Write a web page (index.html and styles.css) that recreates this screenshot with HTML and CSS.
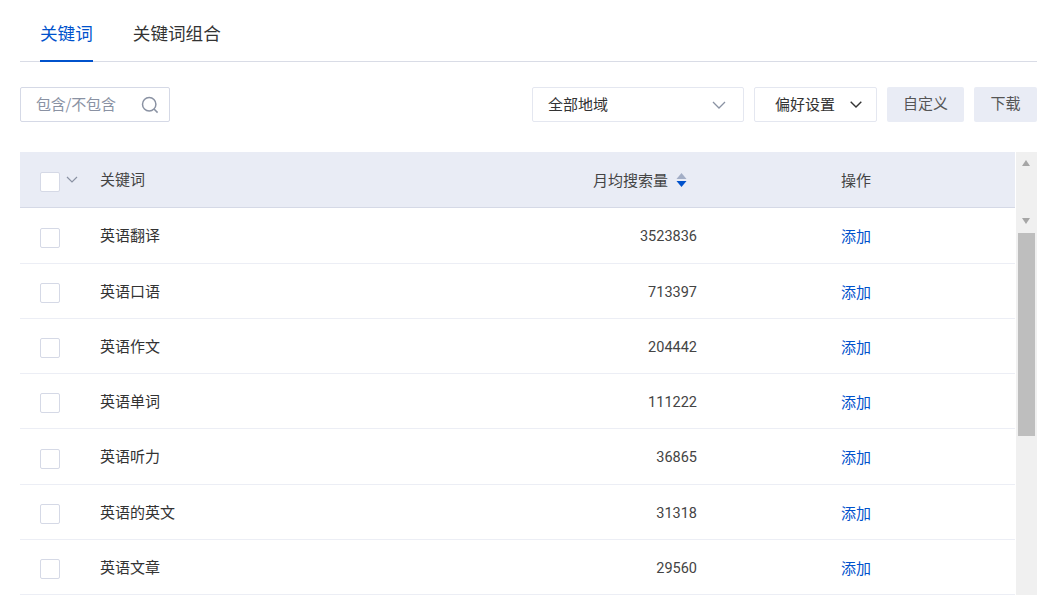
FILE: index.html
```html
<!DOCTYPE html>
<html lang="zh-CN">
<head>
    <meta charset="UTF-8">
    <title>关键词</title>
    <link rel="stylesheet" href="styles.css">
</head>
<body>

    <nav class="tabs">
        <a class="tab active">关键词</a>
        <a class="tab">关键词组合</a>
    </nav>

    <div class="toolbar">
        <div class="search">
            <span class="placeholder">包含/不包含</span>
            <svg class="search-icon" width="18" height="18" viewBox="0 0 18 18" fill="none" stroke="#8a92a3" stroke-width="1.5"><circle cx="8.2" cy="8.2" r="6.7"/><path d="M13 13l3.6 3.6"/></svg>
        </div>
        <div class="select">
            <span>全部地域</span>
            <svg width="14" height="8" viewBox="0 0 14 8" fill="none" stroke="#8a92a3" stroke-width="1.3"><path d="M1 1l6 6 6-6"/></svg>
        </div>
        <div class="prefs">
            <span>偏好设置</span>
            <svg width="12" height="7" viewBox="0 0 12 7" fill="none" stroke="#333" stroke-width="1.4"><path d="M.7.7L6 6l5.3-5.3"/></svg>
        </div>
        <button class="btn btn-custom">自定义</button>
        <button class="btn btn-download">下载</button>
    </div>

    <div class="table-wrap">
        <div class="table">
            <div class="row head">
                <div class="check-cell">
                    <span class="checkbox"></span>
                    <svg class="check-arrow" width="12" height="7" viewBox="0 0 12 7" fill="none" stroke="#8a92a3" stroke-width="1.2"><path d="M1 1l5 5 5-5"/></svg>
                </div>
                <div class="name head-name">关键词</div>
                <div class="num head-num">
                    月均搜索量
                    <svg class="sort" width="11" height="14" viewBox="0 0 11 14"><path d="M5.5 0L10.5 6H.5z" fill="#a3aec6"/><path d="M5.5 14L.5 8h10z" fill="#0052cc"/></svg>
                </div>
                <div class="action head-action">操作</div>
            </div>
            <div class="row">
                <div class="check-cell"><span class="checkbox"></span></div>
                <div class="name">英语翻译</div>
                <div class="num">3523836</div>
                <div class="action"><a class="add">添加</a></div>
            </div>
            <div class="row">
                <div class="check-cell"><span class="checkbox"></span></div>
                <div class="name">英语口语</div>
                <div class="num">713397</div>
                <div class="action"><a class="add">添加</a></div>
            </div>
            <div class="row">
                <div class="check-cell"><span class="checkbox"></span></div>
                <div class="name">英语作文</div>
                <div class="num">204442</div>
                <div class="action"><a class="add">添加</a></div>
            </div>
            <div class="row">
                <div class="check-cell"><span class="checkbox"></span></div>
                <div class="name">英语单词</div>
                <div class="num">111222</div>
                <div class="action"><a class="add">添加</a></div>
            </div>
            <div class="row">
                <div class="check-cell"><span class="checkbox"></span></div>
                <div class="name">英语听力</div>
                <div class="num">36865</div>
                <div class="action"><a class="add">添加</a></div>
            </div>
            <div class="row">
                <div class="check-cell"><span class="checkbox"></span></div>
                <div class="name">英语的英文</div>
                <div class="num">31318</div>
                <div class="action"><a class="add">添加</a></div>
            </div>
            <div class="row">
                <div class="check-cell"><span class="checkbox"></span></div>
                <div class="name">英语文章</div>
                <div class="num">29560</div>
                <div class="action"><a class="add">添加</a></div>
            </div>
        </div>

        <div class="scrollbar">
            <span class="arrow-up"></span>
            <span class="arrow-down"></span>
            <span class="thumb"></span>
        </div>
    </div>

</body>
</html>
```

FILE: styles.css
```css
html, body {
    height: 595px;
    overflow: hidden;
}

body {
    margin: 0;
    padding: 0 10px 0 20px;
    background-color: #fff;
    color: #333;
    font-family: "Noto Sans CJK SC", "Noto Sans", sans-serif;
    font-size: 15px;
}

.tabs {
    display: flex;
    gap: 40px;
    height: 61px;
    padding-left: 20px;
    border-bottom: 1px solid #d9dce6;
}

.tab {
    height: 61px;
    font-size: 17.6px;
    line-height: 65px;
    color: #333;
}

.tab.active {
    color: #0052cc;
    height: 60px;
    border-bottom: 2px solid #0052cc;
}

.toolbar {
    display: flex;
    align-items: stretch;
    height: 35px;
    margin-top: 25px;
    line-height: 33px;
}

.search {
    display: flex;
    align-items: center;
    justify-content: space-between;
    box-sizing: border-box;
    width: 150px;
    padding: 0 10px 0 15px;
    margin-right: 362px;
    border: 1px solid #d5d9e6;
    border-radius: 2px;
}

.placeholder {
    color: #8a92a3;
    margin-top: -2px;
    letter-spacing: -.2px;
}

.select, .prefs {
    display: flex;
    align-items: center;
    justify-content: space-between;
    box-sizing: border-box;
    border: 1px solid #e4e7f0;
    border-radius: 2px;
    margin-right: 10px;
}

.select span, .prefs span {
    margin-top: -2px;
}

.select {
    width: 212px;
    padding: 0 17px 0 15px;
}

.prefs {
    width: 123px;
    padding: 0 14px 0 20px;
}

.btn {
    border: none;
    border-radius: 2px;
    background-color: #e9ecf5;
    color: #555;
    font-family: inherit;
    font-size: 15px;
    line-height: 31px;
    padding: 0 0 4px;
}

.btn-custom {
    width: 77px;
    margin-right: 10px;
}

.btn-download {
    width: 63px;
}

.table-wrap {
    display: flex;
    justify-content: space-between;
    margin-top: 30px;
}

.table {
    width: 995px;
}

.row {
    display: grid;
    grid-template-columns: 80px 200px 1fr 174px;
    align-items: center;
    box-sizing: border-box;
    height: 55.25px;
    border-bottom: 1px solid #eceef5;
}

.row.head {
    height: 56.4px;
    background-color: #e9ecf5;
    border-bottom: 1px solid #d5d9e6;
}

.check-cell {
    display: flex;
    align-items: center;
    padding-left: 20px;
    margin-top: 4px;
}

.checkbox {
    display: block;
    box-sizing: border-box;
    width: 20px;
    height: 20px;
    background-color: #fff;
    border: 1px solid #d5d9e6;
    border-radius: 2px;
}

.check-arrow {
    margin-left: 6px;
    margin-top: -4px;
}

.name {
    margin-top: -1.5px;
}

.num {
    text-align: right;
    padding-right: 144px;
    margin-top: 2.5px;
    font-family: "Roboto", sans-serif;
    font-size: 14.5px;
    color: #444;
}

.action {
    margin-top: .5px;
}

.head-num {
    display: flex;
    align-items: center;
    justify-content: flex-end;
    gap: 8px;
    padding-right: 154px;
    margin-top: 0;
    font-family: inherit;
    font-size: 15px;
}

.head-name, .head-num, .head-action {
    color: #444;
}

.add {
    color: #0052cc;
}

.scrollbar {
    position: relative;
    width: 21px;
    height: 443px;
    background-color: #f0f0f0;
}

.arrow-up, .arrow-down {
    position: absolute;
    left: 6px;
    width: 0;
    height: 0;
    border-left: 4.5px solid transparent;
    border-right: 4.5px solid transparent;
}

.arrow-up {
    top: 8px;
    border-bottom: 6px solid #a6a6a6;
}

.arrow-down {
    top: 66px;
    border-top: 6px solid #a6a6a6;
}

.thumb {
    position: absolute;
    left: 2px;
    top: 81px;
    width: 17px;
    height: 203px;
    background-color: #bebebe;
}
```
